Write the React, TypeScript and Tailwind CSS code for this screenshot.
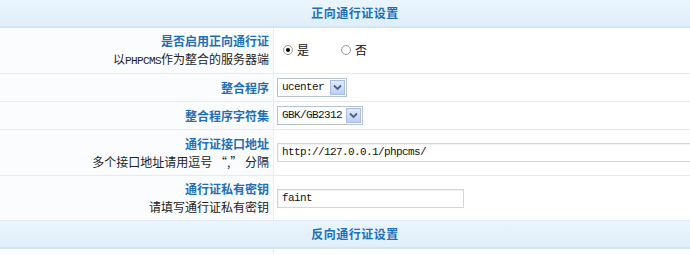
import React from "react";

const cn = "font-['SimSun','Noto_Sans_CJK_SC',sans-serif]";

function Header({ title }: { title: string }) {
  return (
    <div className="h-[28px] bg-gradient-to-b from-[#eaf5fd] to-[#e0eefa] border-b-2 border-[#d2e5f4] flex items-center justify-center">
      <span className="text-[12px] font-bold text-[#1d6fb8] tracking-[0.5px]">{title}</span>
    </div>
  );
}

function Row({
  label,
  desc,
  h,
  children,
}: {
  label: string;
  desc?: React.ReactNode;
  h: string;
  children: React.ReactNode;
}) {
  return (
    <div className={`grid grid-cols-[274px_1fr] border-b border-[#e2ebf2] ${h}`}>
      <div className="bg-[#fbfcfd] border-r border-[#e6edf3] flex flex-col items-end justify-center pr-[4px] leading-[18px]">
        <span className="text-[12px] font-bold text-[#1d6fb8]">{label}</span>
        {desc && <span className="text-[12px] text-[#222]">{desc}</span>}
      </div>
      <div className="flex items-center pl-[3px]">{children}</div>
    </div>
  );
}

function Radio({ checked, label }: { checked?: boolean; label: string }) {
  return (
    <label className="flex items-center gap-[4px] text-[12px] text-[#111]">
      <span className="w-[10px] h-[10px] rounded-full border border-[#9a9a9a] bg-white flex items-center justify-center">
        {checked && <span className="w-[4px] h-[4px] rounded-full bg-black" />}
      </span>
      {label}
    </label>
  );
}

function Select({ value, w }: { value: string; w: string }) {
  return (
    <div className={`h-[19px] ${w} border border-[#b9c3cc] bg-white flex items-center justify-between pl-[4px] pr-[1px]`}>
      <span className="font-['Liberation_Mono',monospace] text-[11px] tracking-[-0.6px] text-[#111]">{value}</span>
      <span className="w-[15px] h-[15px] bg-gradient-to-b from-[#e2ebfb] to-[#bccff2] border border-[#a9bde5] flex items-center justify-center">
        <svg width="9" height="7" viewBox="0 0 9 7">
          <path d="M1 1.5 L4.5 5 L8 1.5" stroke="#4d6185" strokeWidth="1.8" fill="none" />
        </svg>
      </span>
    </div>
  );
}

function Input({ value, w }: { value: string; w: string }) {
  return (
    <div className={`h-[19px] ${w} border border-[#cfd6dc] bg-white flex items-center pl-[4px] shadow-[inset_1px_1px_1px_rgba(0,0,0,0.06)]`}>
      <span className="font-['Liberation_Mono',monospace] text-[11px] tracking-[-0.6px] text-[#111]">{value}</span>
    </div>
  );
}

export default function App() {
  return (
    <div className={`w-[690px] h-[255px] overflow-hidden bg-white ${cn}`}>
      <div className="w-[710px]">
        <Header title="正向通行证设置" />
        <Row
          label="是否启用正向通行证"
          desc={
            <>
              以<span className="font-['Liberation_Mono',monospace] text-[11px] tracking-[-0.6px]">PHPCMS</span>作为整合的服务器端
            </>
          }
          h="h-[46px]"
        >
          <div className="flex items-center gap-[32px] pl-[6px] pb-[2px]">
            <Radio checked label="是" />
            <Radio label="否" />
          </div>
        </Row>
        <Row label="整合程序" h="h-[28px]">
          <Select value="ucenter" w="w-[70px]" />
        </Row>
        <Row label="整合程序字符集" h="h-[28px]">
          <Select value="GBK/GB2312" w="w-[86px]" />
        </Row>
        <Row label="通行证接口地址" desc="多个接口地址请用逗号 “,” 分隔" h="h-[46px]">
          <Input value="http://127.0.0.1/phpcms/" w="w-[430px]" />
        </Row>
        <Row label="通行证私有密钥" desc="请填写通行证私有密钥" h="h-[45px]">
          <Input value="faint" w="w-[187px]" />
        </Row>
        <Header title="反向通行证设置" />
        <Row label="" h="h-[28px]">
          <span />
        </Row>
      </div>
    </div>
  );
}
